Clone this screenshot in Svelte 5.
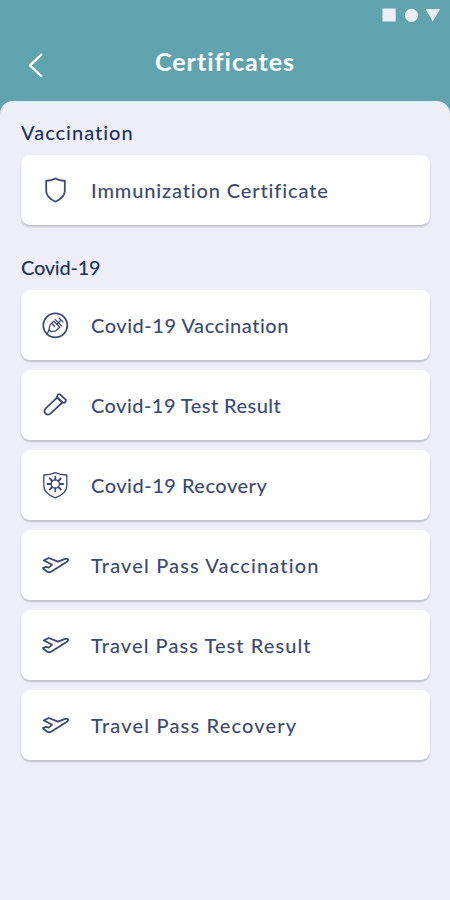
<script>
  const sections = [
    {
      title: 'Vaccination',
      spacing: 1,
      items: [{ icon: 'shield', label: 'Immunization Certificate', spacing: 0.87 }],
    },
    {
      title: 'Covid-19',
      spacing: -0.25,
      items: [
        { icon: 'syringe', label: 'Covid-19 Vaccination', spacing: 0.53 },
        { icon: 'tube', label: 'Covid-19 Test Result', spacing: 0.45 },
        { icon: 'virus', label: 'Covid-19 Recovery', spacing: 0.5 },
        { icon: 'plane', label: 'Travel Pass Vaccination', spacing: 1.14 },
        { icon: 'plane', label: 'Travel Pass Test Result', spacing: 1.06 },
        { icon: 'plane', label: 'Travel Pass Recovery', spacing: 1.18 },
      ],
    },
  ];
</script>

<div class="screen">
  <div class="status">
    <svg width="60" height="14" viewBox="0 0 60 14" fill="#eeeef8">
      <path d="M.5 .5h13.200v13h-13.200z" />
      <circle cx="29.500" cy="7.300" r="6.600" />
      <path d="M43.500 1h14.700L50.800 13.500z" />
    </svg>
  </div>
  <header>
    <button class="back" aria-label="Back">
      <svg width="16" height="26" viewBox="0 0 16 26">
        <path d="M13.200 2.800 2 13.300l11.200 10.700" />
      </svg>
    </button>
    <h1>Certificates</h1>
  </header>

  <main>
    {#each sections as section}
      <section>
        <h2 style="letter-spacing: {section.spacing}px">{section.title}</h2>
        <div class="list">
          {#each section.items as item}
            <button class="card">
              <svg class="icon" viewBox="0 0 30 30">
                {#if item.icon === 'shield'}
                  <path d="M6.200 5.700c3.300.2 6.200-.5 9.300-2.200 3.100 1.700 6 2.400 9.300 2.200v10.300c0 5-4 8.200-9.300 10.700-5.300-2.500-9.300-5.700-9.300-10.700z" />
                {:else if item.icon === 'syringe'}
                  <circle cx="15.300" cy="15.300" r="12" />
                  <g class="thin">
                    <path d="m13.800 11.200 6 6-3.900 3.600-5 .8-1.900-1.900.9-4.600zM9 19.800l-1.600 3.600M17 14l4-4M19.200 8.200l3.600 3.600M15.200 9.500l6.600 6.600M12.500 14.200l2 2" />
                  </g>
                {:else if item.icon === 'tube'}
                  <path d="m17 7.700-11.200 10.600c-3.600 3.500 1.400 8.700 5 5.100L22.300 12.500z" />
                  <path d="M17.900 4.700c.7-.8 1.700-.8 2.500-.1l4.900 4.700c.8.700.8 1.700.1 2.400l-.5.600c-.7.700-1.600.7-2.400 0l-4.900-4.700c-.7-.7-.8-1.600-.1-2.300z" />
                {:else if item.icon === 'virus'}
                  <g class="thin">
                    <path d="M3.800 5C8 5.100 11.700 4.300 15.300 2.700c3.600 1.600 7.300 2.400 11.500 2.300v11c0 5.700-4.700 9.300-11.500 11.800C8.500 25.300 3.800 21.700 3.800 16z" />
                    <circle cx="15.300" cy="14" r="4.200" />
                    <path class="rays" d="M15.300 9.800V6.700M15.300 18.200v3.100M11.100 14H7.500M19.500 14h3.600M12.300 11l-2.500-2.500M18.300 11l2.500-2.500M12.300 17l-2.500 2.500M18.300 17l2.500 2.500" />
                  </g>
                {:else}
                  <path d="M3.900 10.400 8.800 8 18 11.700l6.500-2.600c1.400-.5 2.900-.5 3.500.3.500 1-.3 2-1.800 2.800L11.500 21.500c-1.700 1-3.200 1.100-4.600 0L2.800 18l3-1.100 3 .8 3.300-3z" />
                {/if}
              </svg>
              <span style="letter-spacing: {item.spacing}px">{item.label}</span>
            </button>
          {/each}
        </div>
      </section>
    {/each}
  </main>
</div>

<style>
  :global(body) {
    margin: 0;
    background: #5fa3ae;
  }
  .screen {
    height: 900px;
    display: flex;
    flex-direction: column;
    overflow: hidden;
    background: #5fa3ae;
    font-family: Lato, sans-serif;
    color: #203461;
  }
  .status {
    height: 30px;
    padding: 8px 8px 0 0;
    box-sizing: border-box;
    display: flex;
    justify-content: flex-end;
  }
  header {
    height: 71px;
    display: grid;
    grid-template-columns: 72px 1fr 72px;
    align-items: start;
  }
  button {
    border: 0;
    padding: 0;
    background: none;
    font: inherit;
    color: inherit;
    cursor: pointer;
  }
  .back {
    height: 26px;
    margin-top: 22px;
  }
  .back svg {
    display: block;
    margin: 0 auto;
    fill: none;
    stroke: #fff;
    stroke-width: 2.4;
    stroke-linecap: round;
    stroke-linejoin: round;
  }
  h1 {
    margin: 15px 0 0;
    font-size: 25px;
    line-height: 32px;
    letter-spacing: 1px;
    text-align: center;
    color: #fff;
  }
  main {
    flex: 1;
    padding: 19px 20px 0 21px;
    border-radius: 13px 13px 0 0;
    background: #eeeef8;
  }
  section {
    margin-bottom: 30px;
  }
  h2 {
    margin: 0 0 11px;
    font-size: 20px;
    line-height: 24px;
    font-weight: 500;
  }
  .list {
    display: grid;
    gap: 10px;
  }
  .card {
    height: 70px;
    padding-left: 19px;
    display: flex;
    align-items: center;
    border-radius: 9px;
    background: #fff;
    box-shadow: 0 2px 2px #bfc3cf;
    font-size: 20px;
    font-weight: 500;
    color: #3b4b74;
    white-space: nowrap;
  }
  .icon {
    width: 30px;
    height: 30px;
    margin-right: 21px;
    fill: none;
    stroke: #3b4b74;
    stroke-width: 1.8;
    stroke-linecap: round;
    stroke-linejoin: round;
  }
  .thin {
    stroke-width: 1.3;
  }
  .rays {
    stroke-width: 1.8;
  }
</style>
